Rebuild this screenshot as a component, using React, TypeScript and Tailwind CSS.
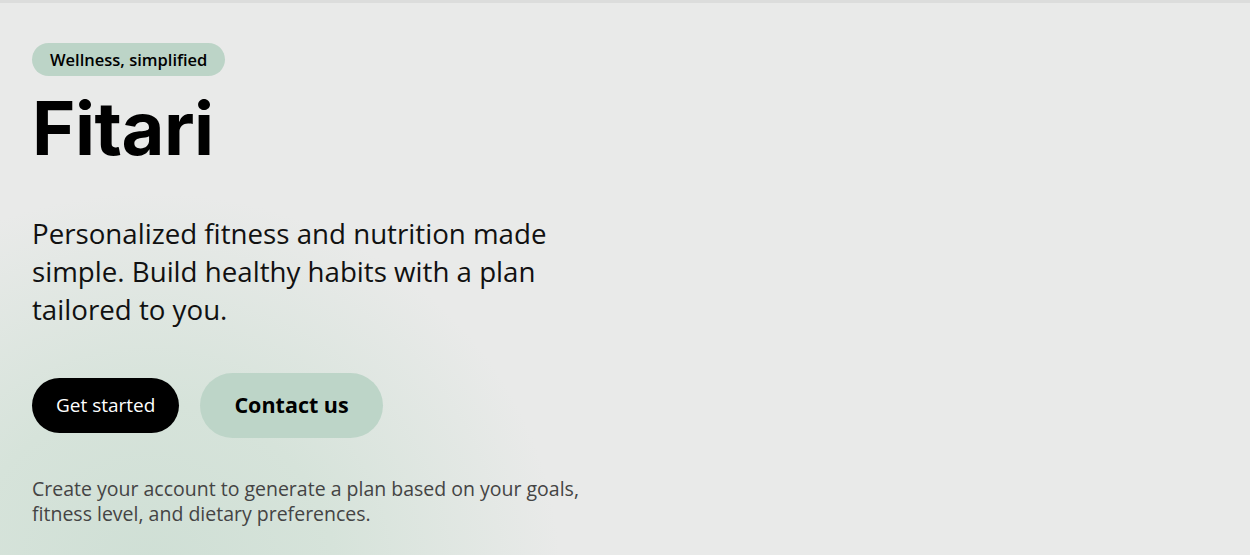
export default function App() {
  return (
    <div className="relative min-h-screen w-full overflow-hidden bg-[#e9eae9] border-t-[3px] border-t-[#dcdddc]" style={{ fontFamily: '"Open Sans", "Noto Sans", sans-serif' }}>
      <div className="pointer-events-none absolute left-[-260px] top-[190px] h-[760px] w-[820px] rounded-full bg-[radial-gradient(closest-side,#cfdfd5_0%,#d6e3da_45%,rgba(233,234,233,0)_100%)]" />
      <div className="relative flex flex-col items-start px-8 pt-10">
        <span className="rounded-full bg-[#bcd4c7] px-[18px] py-[6px] text-[16.5px] font-semibold leading-[21px] text-black">
          Wellness, simplified
        </span>
        <h1 className="mt-[12px] text-[74px] font-bold leading-[80px] tracking-[-0.5px] text-black" style={{ fontFamily: 'Inter, "Noto Sans", sans-serif' }}>
          Fitari
        </h1>
        <p className="mt-[46px] w-[580px] text-[27.7px] leading-[38px] text-[#111]">
          Personalized fitness and nutrition made simple. Build healthy habits with a plan tailored to you.
        </p>
        <div className="mt-[45px] flex items-center gap-[21px]">
          <button className="h-[55px] rounded-full bg-black px-[24px] text-[19px] font-medium text-white">
            Get started
          </button>
          <button className="h-[65px] rounded-full bg-[#bdd5c8] px-[34px] text-[21.5px] font-bold text-black">
            Contact us
          </button>
        </div>
        <p className="mt-[38px] w-[600px] text-[19.5px] leading-[25px] text-[#444]">
          Create your account to generate a plan based on your goals, fitness level, and dietary preferences.
        </p>
      </div>
    </div>
  )
}
